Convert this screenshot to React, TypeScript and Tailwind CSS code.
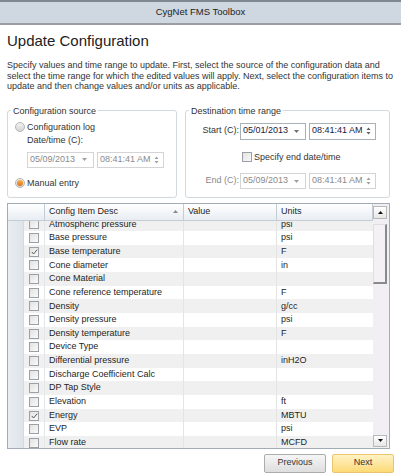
import React from "react"

const rows: [string, string, boolean][] = [
  ["Atmospheric pressure", "psi", false],
  ["Base pressure", "psi", false],
  ["Base temperature", "F", true],
  ["Cone diameter", "in", false],
  ["Cone Material", "", false],
  ["Cone reference temperature", "F", false],
  ["Density", "g/cc", false],
  ["Density pressure", "psi", false],
  ["Density temperature", "F", false],
  ["Device Type", "", false],
  ["Differential pressure", "inH2O", false],
  ["Discharge Coefficient Calc", "", false],
  ["DP Tap Style", "", false],
  ["Elevation", "ft", false],
  ["Energy", "MBTU", true],
  ["EVP", "psi", false],
  ["Flow rate", "MCFD", false],
]

const Spinner = ({ color }: { color: string }) => (
  <svg width="5" height="8" viewBox="0 0 5 8" className="shrink-0">
    <path d="M2.5 0.5 L4.5 3 L0.5 3 Z M2.5 7.5 L4.5 5 L0.5 5 Z" fill={color} />
  </svg>
)

const Drop = ({ color }: { color: string }) => (
  <svg width="5" height="3" viewBox="0 0 5 3" className="shrink-0">
    <path d="M0 0 L5 0 L2.5 3 Z" fill={color} />
  </svg>
)

const DateBox = ({ value, disabled, w, h }: { value: string; disabled?: boolean; w: string; h: string }) => (
  <div className={`flex items-center justify-between pl-[2px] pr-[6px] border bg-white ${w} ${h} ${disabled ? "border-[#d4d4d4] text-[#8a8a8a]" : "border-[#a9b1b8] text-[#1a1a40]"}`}>
    <span>{value}</span>
    <Drop color={disabled ? "#a0a0a0" : "#707070"} />
  </div>
)

const TimeBox = ({ value, disabled, w, h }: { value: string; disabled?: boolean; w: string; h: string }) => (
  <div className={`flex items-center justify-between pl-[2px] pr-[4px] border bg-white ${w} ${h} ${disabled ? "border-[#d4d4d4] text-[#8a8a8a]" : "border-[#a9b1b8] text-[#1a1a40]"}`}>
    <span>{value}</span>
    <Spinner color={disabled ? "#a0a0a0" : "#606060"} />
  </div>
)

const Radio = ({ on }: { on?: boolean }) => (
  <span className="w-[10px] h-[10px] rounded-full border border-[#b4b4b4] bg-gradient-to-b from-[#f2f2f2] to-[#d6d6d6] flex items-center justify-center shrink-0">
    {on && <span className="w-[6px] h-[6px] rounded-full bg-gradient-to-b from-[#f7b24a] to-[#e0701a]" />}
  </span>
)

const Check = ({ on }: { on?: boolean }) => (
  <span className="w-[10px] h-[10px] border border-[#9aa0a6] bg-gradient-to-br from-[#e2e2e2] to-[#fafafa] flex items-center justify-center shrink-0">
    {on && (
      <svg width="7" height="6" viewBox="0 0 7 6">
        <path d="M0.8 3 L2.6 5 L6.2 0.6" stroke="#5a5a5a" strokeWidth="1" fill="none" />
      </svg>
    )}
  </span>
)

export default function App() {
  return (
    <div className="w-[401px] h-[473px] bg-white overflow-hidden text-[9px] text-[#1e1e1e]" style={{ fontFamily: '"Liberation Sans", Arial, sans-serif' }}>
      <div className="h-[25px] border-t-2 border-t-[#7f8790] border-b-2 border-b-[#9a9ea3] bg-[#cfd8e0] flex items-center justify-center text-[9.5px] text-[#222]">
        CygNet FMS Toolbox
      </div>

      <div className="px-[7px]">
        <h1 className="text-[15px] leading-[18px] mt-[7px] text-[#222]">Update Configuration</h1>
        <p className="mt-[10px] leading-[10.5px] text-[#333]">
          Specify values and time range to update. First, select the source of the configuration data and select the time range for which the edited values will apply. Next, select the configuration items to update and then change values and/or units as applicable.
        </p>

        <div className="flex gap-[8px] mt-[14px]">
          <fieldset className="w-[170px] h-[92px] border border-[#d2d9de] rounded-[3px] px-[7px] text-[#333]">
            <legend className="ml-[-4px] px-[2px] leading-[10px]">Configuration source</legend>
            <div className="flex items-center gap-[2px] mt-[5px]">
              <Radio />
              <span>Configuration log</span>
            </div>
            <div className="pl-[12px] mt-[0px]">Date/time (C):</div>
            <div className="flex gap-[3px] pl-[12px] mt-[4px]">
              <DateBox value="05/09/2013" disabled w="w-[67px]" h="h-[16px]" />
              <TimeBox value="08:41:41 AM" disabled w="w-[67px]" h="h-[16px]" />
            </div>
            <div className="flex items-center gap-[2px] mt-[9px]">
              <Radio on />
              <span>Manual entry</span>
            </div>
          </fieldset>

          <fieldset className="w-[205px] h-[92px] border border-[#d2d9de] rounded-[3px] text-[#333]">
            <legend className="ml-[3px] px-[2px] leading-[10px]">Destination time range</legend>
            <div className="flex items-center mt-[7px]">
              <span className="w-[54px] text-right pr-[1px]">Start (C):</span>
              <DateBox value="05/01/2013" w="w-[66px]" h="h-[17px]" />
              <span className="w-[3px]" />
              <TimeBox value="08:41:41 AM" w="w-[67px]" h="h-[17px]" />
            </div>
            <div className="flex items-center gap-[2px] pl-[56px] mt-[11px]">
              <Check />
              <span>Specify end date/time</span>
            </div>
            <div className="flex items-center mt-[9px] text-[#8a8a8a]">
              <span className="w-[54px] text-right pr-[1px]">End (C):</span>
              <DateBox value="05/09/2013" disabled w="w-[66px]" h="h-[16px]" />
              <span className="w-[3px]" />
              <TimeBox value="08:41:41 AM" disabled w="w-[67px]" h="h-[16px]" />
            </div>
          </fieldset>
        </div>

        <div className="mt-[5px] w-[383px] h-[246px] border border-[#a3acb6] flex">
          <div className="flex-1 flex flex-col min-w-0">
            <div className="h-[17px] flex bg-gradient-to-b from-[#ffffff] to-[#e8edf3] border-b border-[#c4ccd6] shrink-0">
              <div className="w-[37px] border-r border-[#c4ccd6]" />
              <div className="w-[139px] border-r border-[#c4ccd6] flex items-center justify-between pl-[4px] pr-[5px]">
                <span>Config Item Desc</span>
                <svg width="5" height="3" viewBox="0 0 5 3"><path d="M0 3 L5 3 L2.5 0 Z" fill="#8a8a8a" /></svg>
              </div>
              <div className="w-[93px] border-r border-[#c4ccd6] flex items-center pl-[4px]">Value</div>
              <div className="flex-1 flex items-center pl-[4px] border-r border-[#c4ccd6]">Units</div>
            </div>
            <div className="flex-1 overflow-hidden">
              <div className="mt-[-3px]">
                {rows.map(([name, unit, on], i) => (
                  <div key={name} className={`h-[13.67px] flex ${i % 2 === 0 ? "bg-[#f0f0f0]" : "bg-white"}`}>
                    <div className="w-[16px] bg-gradient-to-r from-[#e9edf2] to-[#dfe4ea] border-r border-[#d4dae1]" />
                    <div className="w-[21px] flex items-center justify-center border-r border-[#e6e6e6]">
                      <Check on={on} />
                    </div>
                    <div className="w-[139px] flex items-center pl-[4px] border-r border-[#e4e4e4] whitespace-nowrap">{name}</div>
                    <div className="w-[93px] border-r border-[#e4e4e4]" />
                    <div className="flex-1 flex items-center pl-[4px]">{unit}</div>
                  </div>
                ))}
              </div>
            </div>
          </div>

          <div className="w-[16px] flex flex-col bg-[#f1eff3] pr-[2px]">
            <div className="h-[13px] mt-[2px] border border-[#b8b8b8] bg-gradient-to-b from-[#ffffff] to-[#e6e6e6] flex items-center justify-center">
              <svg width="5" height="3" viewBox="0 0 5 3"><path d="M0 3 L5 3 L2.5 0 Z" fill="#111" /></svg>
            </div>
            <div className="flex-1 flex flex-col pt-[5px]">
              <div className="h-[60px] border-l border-t border-[#e0dde2] border-r-2 border-r-[#8a8a8a] border-b-2 border-b-[#8a8a8a] bg-[#f3f1f4]" />
            </div>
            <div className="h-[12px] mb-[1px] border border-[#b8b8b8] bg-gradient-to-b from-[#ffffff] to-[#e6e6e6] flex items-center justify-center">
              <svg width="5" height="3" viewBox="0 0 5 3"><path d="M0 0 L5 0 L2.5 3 Z" fill="#111" /></svg>
            </div>
          </div>
        </div>

        <div className="flex justify-end gap-[6px] mt-[5px]">
          <button className="w-[62px] h-[19px] rounded-[2px] border border-[#acacac] bg-gradient-to-b from-[#f6f6f6] to-[#dedede] text-[#333]">Previous</button>
          <button className="w-[62px] h-[19px] rounded-[2px] border border-[#e9c66e] bg-gradient-to-b from-[#fff2c4] to-[#fcd974] text-[#333]">Next</button>
        </div>
      </div>
    </div>
  )
}
